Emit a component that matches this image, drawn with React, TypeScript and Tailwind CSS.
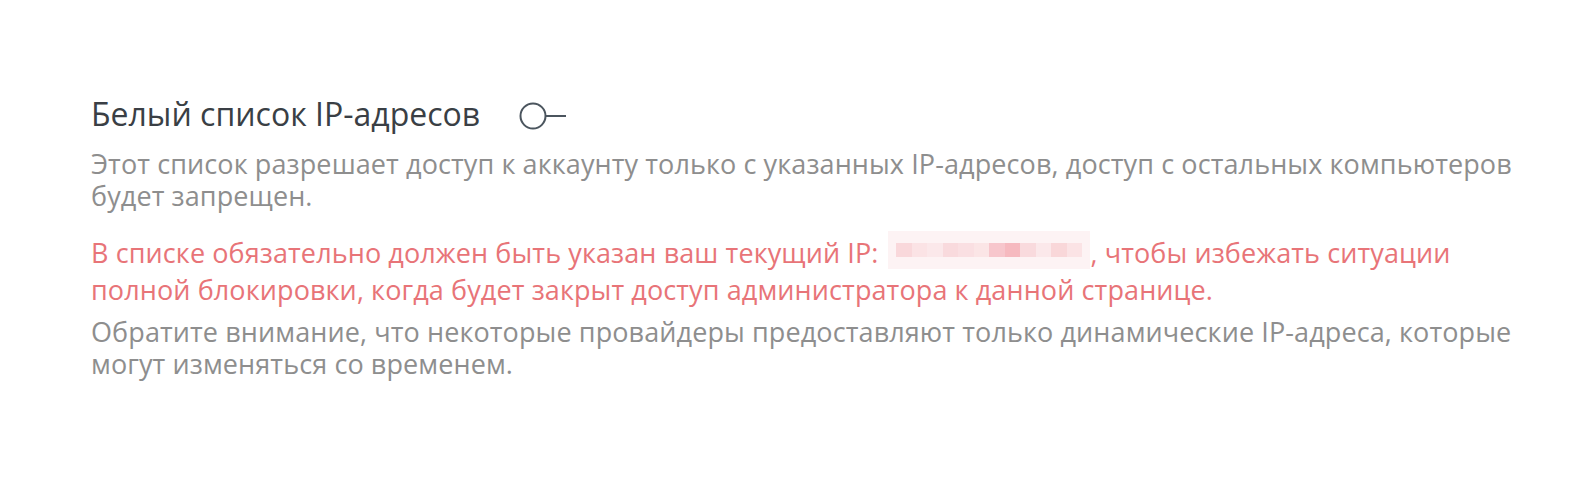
import React from 'react';

// opacity of each cell in the pixelated IP mask
const maskedIp = [0.3, 0.18, 0.12, 0.28, 0.22, 0.16, 0.5, 0.65, 0.28, 0.12, 0.32, 0.18];

function SwitchOff() {
  return (
    <svg width="48" height="30" viewBox="0 0 48 30" fill="none" className="ml-[39px] mt-[4px] shrink-0">
      <circle cx="14" cy="15" r="12.5" stroke="#4b555e" strokeWidth="2" />
      <line x1="26.5" y1="15" x2="47" y2="15" stroke="#4b555e" strokeWidth="2" />
    </svg>
  );
}

function MaskedIp() {
  return (
    <span className="inline-block overflow-hidden align-[-11px] my-[5px] ml-[10px] h-[38px] w-[202px] bg-[#fdf3f4]">
      <span className="flex h-full items-center px-[8px]">
        {maskedIp.map((o, i) => (
          <span key={i} className="h-[14px] w-[15.5px] bg-[#f29aa3]" style={{ opacity: o }} />
        ))}
      </span>
    </span>
  );
}

export default function App() {
  return (
    <div className="min-h-[500px] bg-white font-['Open_Sans',sans-serif]">
      <div className="pl-[91px] pt-[94px] w-[1540px]">
        <div className="flex items-center">
          <h2 className="text-[32px] leading-[40px] text-[#3a3f45] font-normal">Белый список IP-адресов</h2>
          <SwitchOff />
        </div>
        <p className="mt-[14px] text-[27px] leading-[32px] tracking-[0.1px] text-[#8e8e8e]">
          Этот список разрешает доступ к аккаунту только с указанных IP-адресов, доступ с остальных компьютеров будет запрещен.
        </p>
        <p className="mt-[14px] text-[27px] leading-[32px] tracking-[0.1px] text-[#e87478]">
          В списке обязательно должен быть указан ваш текущий IP:<MaskedIp />, чтобы избежать ситуации полной блокировки, когда будет закрыт доступ администратора к данной странице.
        </p>
        <p className="mt-[10px] text-[27px] leading-[32px] tracking-[0.1px] text-[#8e8e8e]">
          Обратите внимание, что некоторые провайдеры предоставляют только динамические IP-адреса, которые могут изменяться со временем.
        </p>
      </div>
    </div>
  );
}
